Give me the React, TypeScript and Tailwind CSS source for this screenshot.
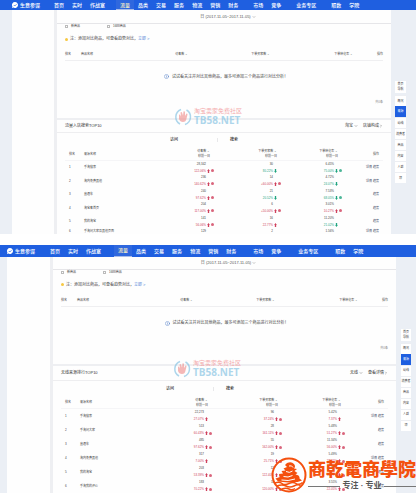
import clsx from "clsx";
import { ChevronDown, ChevronRight, Info } from "lucide-react";

type Trend = "up" | "down";

interface Metric {
	value: string;
	rate?: string;
	trend?: Trend;
	alert?: boolean;
}

interface Row {
	name: string;
	metrics: Metric[];
	actions: string[];
}

interface Theme {
	brand: string;
	nav: string;
	header: string;
	gutter: string;
	sidebar: string;
	date: string;
	content: string;
	thead: string;
	rankHead: string;
	rankRow: string;
	title: string;
	tabs: string;
	rail: string;
	railNav: string;
	opCol: string;
	convCol: string;
	buyerCol: string;
	watermark: string;
}

interface Screen {
	id: string;
	date: string;
	filters: string[];
	hint: string;
	empty: string;
	title: string;
	tabs: string[];
	links: string[];
	rail: string[];
	rows: Row[];
	theme: Theme;
}

const m = (
	value: string,
	rate?: string,
	trend: Trend = "up",
	alert = true,
): Metric => ({ value, rate, trend, alert });

const NAV_GROUPS = [
	["首页", "实时", "作战室"],
	["流量", "品类", "交易", "服务", "物流", "营销", "财务"],
	["市场", "竞争"],
	["业务专区"],
	["取数", "学院"],
];

const SCREENS: Screen[] = [
	{
		id: "a",
		date: "日 (2017-11-05~2017-11-05)",
		filters: ["新商品", "1688商品"],
		hint: "添加对比商品，可查看趋势对比，",
		empty: "试试看关注并对比其他商品，最多可添加三个商品进行对比分析！",
		title: "流量入店搜索TOP10",
		tabs: ["访问", "搜索"],
		links: ["淘宝", "店铺构成"],
		rail: ["首页", "概况", "来源", "动线", "消费者", "商品", "内容", "人群", "顶"],
		rows: [
			{
				name: "手淘搜索",
				metrics: [m("28,342", "122.06%"), m("30", "80.22%", "down", false), m("6.45%", "75.00%", "down")],
				actions: ["详情", "趋势"],
			},
			{
				name: "淘内免费其他",
				metrics: [m("236", "140.62%"), m("14", "+60.00%"), m("4.72%", "24.07%", "down", false)],
				actions: ["详情", "趋势"],
			},
			{
				name: "直通车",
				metrics: [m("240", "97.62%"), m("21", "20.52%", "down", false), m("7.53%", "68.05%", "down")],
				actions: ["趋势"],
			},
			{
				name: "淘宝客首页",
				metrics: [m("204", "117.00%"), m("6", "+50.00%"), m("3.01%", "10.27%")],
				actions: ["趋势"],
			},
			{
				name: "我的淘宝",
				metrics: [m("141", "56.06%"), m("16", "22.77%", "up", false), m("11.20%", "21.02%", "down", false)],
				actions: ["趋势"],
			},
			{
				name: "手淘问大家及其他页面",
				metrics: [m("129"), m("2"), m("1.56%")],
				actions: ["详情", "趋势"],
			},
		],
		theme: {
			brand: "pl-3 gap-[2px]",
			nav: "ml-[14px] gap-[15px]",
			header: "h-[10px]",
			gutter: "w-3",
			sidebar: "w-[42px]",
			date: "h-[14px]",
			content: "px-2",
			thead: "h-[11px]",
			rankHead: "h-[13px]",
			rankRow: "odd:h-[13px] even:h-[14px]",
			title: "h-[13px]",
			tabs: "h-[15px]",
			rail: "w-[25px] pl-1 pr-[10px]",
			railNav: "pt-[71px]",
			opCol: "w-[41px]",
			convCol: "w-[61px]",
			buyerCol: "w-[67px]",
			watermark: "left-[174px] top-[108px]",
		},
	},
	{
		id: "b",
		date: "日 (2017-11-05~2017-11-05)",
		filters: ["新商品", "1688商品"],
		hint: "添加对比商品，可查看趋势对比，",
		empty: "试试看关注并对比其他商品，最多可添加三个商品进行对比分析！",
		title: "无线来源排行TOP10",
		tabs: ["访问", "搜索"],
		links: ["无线", "查看详情"],
		rail: ["首页", "概况", "来源", "动线", "消费者", "商品", "内容", "人群", "顶"],
		rows: [
			{
				name: "手淘搜索",
				metrics: [m("22,273", "27.07%", "up", false), m("96", "37.24%"), m("5.42%", "7.37%", "up", false)],
				actions: ["详情", "趋势"],
			},
			{
				name: "手淘问大家",
				metrics: [m("513", "60.43%"), m("28", "161.11%"), m("5.48%", "51.27%")],
				actions: ["趋势"],
			},
			{
				name: "直通车",
				metrics: [m("485", "97.62%"), m("55", "162.00%"), m("11.34%", "56.00%")],
				actions: ["趋势"],
			},
			{
				name: "淘内免费其他",
				metrics: [m("317", "7.00%", "up", false), m("19", "25.71%"), m("5.49%", "28.05%")],
				actions: ["详情", "趋势"],
			},
			{
				name: "我的淘宝",
				metrics: [m("203", "53.39%"), m("12", "122.40%"), m("5.91%", "30.77%")],
				actions: ["趋势"],
			},
			{
				name: "手淘我的评价",
				metrics: [m("183", "70.22%"), m("11", "120.00%"), m("3.55%", "22.05%")],
				actions: ["趋势"],
			},
		],
		theme: {
			brand: "pl-[7px] gap-[2px]",
			nav: "ml-[15px] gap-[17px]",
			header: "h-3",
			gutter: "w-[7px]",
			sidebar: "w-[43px]",
			date: "h-[13px]",
			content: "px-2",
			thead: "h-3",
			rankHead: "h-[13px]",
			rankRow: "h-[14px]",
			title: "h-[15px]",
			tabs: "h-[15px]",
			rail: "w-5 pl-[5px] pr-[5px]",
			railNav: "pt-[72px]",
			opCol: "w-[43px]",
			convCol: "w-[63px]",
			buyerCol: "w-[70px]",
			watermark: "left-[173px] top-[115px]",
		},
	},
];

function TopBar({ theme }: { theme: Theme }) {
	return (
		<header
			className={clsx(
				"flex items-center bg-[#1f5fe0] font-medium text-[5px] text-white leading-[8px]",
				theme.header,
			)}
		>
			<div className={clsx("flex items-center", theme.brand)}>
				<svg viewBox="0 0 12 12" className="size-[6px]" aria-hidden="true">
					<path d="M6 0a6 6 0 1 1-3 11.200L0 12 .8 9A6 6 0 0 1 6 0z" fill="#fff" />
					<path d="M3.500 6 5.500 8 9 4.500" fill="none" stroke="#1f5fe0" strokeWidth="1.400" />
				</svg>
				<span className="whitespace-nowrap">生意参谋</span>
			</div>
			<nav className={clsx("flex h-full items-center", theme.nav)}>
				{NAV_GROUPS.map((group) => (
					<div key={group[0]} className="flex h-full gap-2">
						{group.map((item) => (
							<a
								key={item}
								href="#top"
								className={clsx(
									"flex h-full items-center whitespace-nowrap",
									item === "流量" &&
										"-mx-1 border-[#a9bdea] border-b bg-[#2f68de] px-1 text-[#f3ecc4]",
								)}
							>
								{item}
							</a>
						))}
					</div>
				))}
			</nav>
		</header>
	);
}

function CompareTable({ screen }: { screen: Screen }) {
	const { theme } = screen;
	return (
		<section className="pb-[7px]">
			<div
				className={clsx(
					"flex items-center justify-center border-[#e6e6e9] border-b pl-[8px] text-[#555] text-[4px] leading-[6px]",
					theme.date,
				)}
			>
				<button type="button" className="flex items-center gap-px whitespace-nowrap">
					{screen.date}
					<ChevronDown className="size-1" />
				</button>
			</div>
			<div className={theme.content}>
				<div className="flex h-[5px] items-center gap-[27px] text-[#444] text-[3px] leading-[5px]">
					{screen.filters.map((label) => (
						<label key={label} className="flex items-center gap-[3px] whitespace-nowrap">
							<input
								type="checkbox"
								className="size-[3px] appearance-none border border-[#bbb] bg-white"
							/>
							{label}
						</label>
					))}
				</div>
				<p className="flex h-5 items-center whitespace-nowrap text-[#444] text-[4px] leading-[6px]">
					<span className="mr-[2px] size-[3px] rounded-full bg-[#f7c843]" />
					注：
					{screen.hint}
					<a href="#help" className="text-[#4f83d6]">
						立即 &gt;
					</a>
				</p>
				<table className="w-full table-fixed text-[#444] text-[3px] leading-[6px]">
					<thead>
						<tr className={clsx("border-[#efeff1] border-b", theme.thead)}>
							<th className="w-4 text-left font-normal">排名</th>
							<th className="text-left font-normal">商品名称</th>
							<th className="w-5 text-right font-normal">访客数 ⌄</th>
							<th className="w-[82px] text-right font-normal">下单买家数 ⌄</th>
							<th className="w-[83px] text-right font-normal">下单转化率 ⌄</th>
							<th className="w-[30px] text-right font-normal">操作</th>
						</tr>
					</thead>
				</table>
				<p className="flex h-8 items-center justify-center gap-[3px] whitespace-nowrap pl-1 text-[#444] text-[4px] leading-[6px]">
					<Info className="size-[5px] text-[#3f6fbf]" />
					{screen.empty}
				</p>
				<p className="flex h-[18px] items-center justify-end text-[#888] text-[3px] leading-[6px]">
					共0条
				</p>
			</div>
		</section>
	);
}

function MetricCell({ metric }: { metric: Metric }) {
	const up = metric.trend === "up";
	return (
		<td className="align-top">
			<div className="pr-2 text-right text-[#444]">{metric.value}</div>
			{metric.rate && (
				<div
					className={clsx(
						"mt-px flex items-center justify-end",
						up ? "text-[#cf3f5b]" : "text-[#1fa47e]",
					)}
				>
					{metric.rate}
					<span className="flex w-2 items-center gap-px pl-px">
						<svg viewBox="0 0 4 6" className="h-[4px] w-[3px]" aria-hidden="true">
							<path
								d={up ? "M2 0 4 3H3V6H1V3H0Z" : "M2 6 4 3H3V0H1V3H0Z"}
								fill="currentColor"
							/>
						</svg>
						{metric.alert && <span className="size-[3px] rounded-full bg-current opacity-80" />}
					</span>
				</div>
			)}
		</td>
	);
}

function RankTable({ screen }: { screen: Screen }) {
	const { theme, rows } = screen;
	return (
		<section className="border-[#eeeff2] border-t-2">
			<div
				className={clsx(
					"flex items-center justify-between border-[#eeeef0] border-b text-[#333] leading-[6px]",
					theme.content,
					theme.title,
				)}
			>
				<h2 className="text-[4px]">{screen.title}</h2>
				<div className="flex gap-[5px] text-[4px]">
					<button type="button" className="flex items-center gap-px">
						{screen.links[0]}
						<ChevronDown className="size-1" />
					</button>
					<a href="#detail" className="flex items-center">
						{screen.links[1]}
						<ChevronRight className="size-1" />
					</a>
				</div>
			</div>
			<div
				className={clsx(
					"flex items-center pl-[113px] font-medium text-[#222] text-[4px] leading-[6px]",
					theme.tabs,
				)}
			>
				<button type="button">{screen.tabs[0]}</button>
				<span className="mr-3 ml-[39px] h-1 w-px bg-[#e8e8ea]" />
				<button type="button">{screen.tabs[1]}</button>
			</div>
			<div className={theme.content}>
				<table className="w-full table-fixed text-[#444] text-[3px] leading-[6px]">
					<thead>
						<tr
							className={clsx(
								"leading-[5px] shadow-[inset_0_-1px_#f5f5f7]",
								theme.rankHead,
							)}
						>
							<th className="w-[19px] pl-1 text-left font-normal">排名</th>
							<th className="text-left font-normal">来源名称</th>
							<th className="w-[30px] pr-1 text-right font-normal">
								访客数 ⌄<br />
								较前一日
							</th>
							<th className={clsx("pr-1 text-right font-normal", theme.buyerCol)}>
								下单买家数 ⌄<br />
								较前一日
							</th>
							<th className={clsx("pr-1 text-right font-normal", theme.convCol)}>
								下单转化率 ⌄<br />
								较前一日
							</th>
							<th className={clsx("pr-1 text-right font-normal", theme.opCol)}>操作</th>
						</tr>
					</thead>
					<tbody>
						{rows.map((row, i) => (
							<tr
								key={row.name}
								className={row.metrics[0].rate ? theme.rankRow : undefined}
							>
								<td className="pl-1">{i + 1}</td>
								<td className="whitespace-nowrap">{row.name}</td>
								{row.metrics.map((metric) => (
									<MetricCell key={metric.value} metric={metric} />
								))}
								<td className="pr-1 text-right text-[#3a4663]">
									{row.actions.map((action) => (
										<a key={action} href="#row" className="ml-px">
											{action}
										</a>
									))}
								</td>
							</tr>
						))}
					</tbody>
				</table>
			</div>
		</section>
	);
}

function Rail({ screen }: { screen: Screen }) {
	const { theme, rail } = screen;
	return (
		<aside className={clsx("shrink-0 bg-[#ebeff5]", theme.rail)}>
			<nav className={clsx("text-center text-[#444] text-[3px] leading-[5px]", theme.railNav)}>
				<a href="#guide" className="mb-[2px] block bg-white py-px">
					首页
					<br />
					导航
				</a>
				{rail.slice(1).map((item) => (
					<a
						key={item}
						href="#section"
						className={clsx(
							"flex h-[11px] items-center justify-center whitespace-nowrap",
							item === "来源"
								? "bg-[#1f5fe0] text-white"
								: "border-[#eceef2] border-t bg-white",
						)}
					>
						{item}
					</a>
				))}
			</nav>
		</aside>
	);
}

function Watermark({ className }: { className: string }) {
	return (
		<div
			className={clsx("pointer-events-none absolute flex items-center gap-[2px] opacity-60", className)}
		>
			<svg viewBox="0 0 36 36" className="size-[18px]" aria-hidden="true">
				<path d="M14 3A16 16 0 0 0 12 32" fill="none" stroke="#78bce0" strokeWidth="3" />
				<path d="M22 33A16 16 0 0 0 25 4" fill="none" stroke="#78bce0" strokeWidth="3" />
				<path
					d="M10 13q2-1 4 4L13 9q2-2 3 0l2 6 1-8q2-1 3 1v8l3-5q2 0 2 2l-2 8q-1 7-7 7-6 0-8-6z"
					fill="#f08a88"
				/>
			</svg>
			<div className="whitespace-nowrap">
				<div className="text-[#ee7377] text-[6px] leading-[7px]">淘宝卖家免费社区</div>
				<div className="font-['Open_Sans'] font-bold text-[#78bce0] text-[10px] leading-[11px]">
					TB58.NET
				</div>
			</div>
		</div>
	);
}

function AcademyLogo() {
	return (
		<div className="pointer-events-none absolute right-0 bottom-0 flex items-center gap-px">
			<svg viewBox="0 0 72 72" className="size-9" aria-hidden="true">
				<circle cx="36" cy="36" r="33" fill="none" stroke="#f4500e" strokeWidth="4" />
				<path
					d="M32 12q9-4 14 2 4 5 0 9l6 1-5 4 6 4-4 3q9 1 8 8l5 4-9 3-19 1-20-2-5-6 9-3-2-6 8-1-3-5 8-1-4-4 7-3-4-4z"
					fill="#f4500e"
				/>
				<path
					d="M36 18q6-2 8 3M30 29q7 4 13-1M25 39q9 3 18-2M21 46q13 3 27-2"
					fill="none"
					stroke="#fff"
					strokeWidth="2"
				/>
				<path
					d="M8 52q8-3 14 1t14 0 14 0 13-2M12 58q10-4 18 0t16 0 13-1M22 64q8-3 14 0t12-1"
					fill="none"
					stroke="#f4500e"
					strokeWidth="3"
				/>
			</svg>
			<div>
				<div className="whitespace-nowrap font-black text-[#f4500e] text-[18px] leading-[22px]">
					商乾電商學院
				</div>
				<div className="flex items-center gap-[2px] whitespace-nowrap font-bold text-[#555] text-[8px] leading-[10px]">
					<span className="h-px flex-1 bg-[#777]" />
					专注 · 专业
					<span className="h-px flex-1 bg-[#777]" />
				</div>
			</div>
		</div>
	);
}

function Dashboard({ screen }: { screen: Screen }) {
	const { theme } = screen;
	return (
		<div className="relative">
			<TopBar theme={theme} />
			<div className="flex">
				<div className={clsx("shrink-0 bg-[#ebeff5]", theme.gutter)} />
				<div className={clsx("shrink-0 bg-[#fefefe]", theme.sidebar)} />
				<main className="min-w-0 flex-1 border-[#eeeff2] border-l-[3px] bg-[#fefefe]">
					<CompareTable screen={screen} />
					<RankTable screen={screen} />
				</main>
				<Rail screen={screen} />
			</div>
			<Watermark className={theme.watermark} />
			{screen.id === "b" && <AcademyLogo />}
		</div>
	);
}

export default function App() {
	return (
		<div className="flex flex-col gap-[11px] bg-white pr-1 font-['Liberation_Sans','Noto_Sans_CJK_SC',sans-serif]">
			{SCREENS.map((screen) => (
				<Dashboard key={screen.id} screen={screen} />
			))}
		</div>
	);
}
